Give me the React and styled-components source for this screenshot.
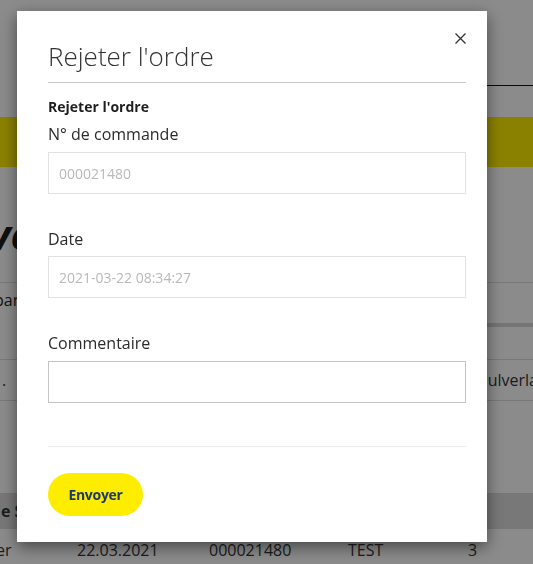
import React from 'react';
import styled, { createGlobalStyle } from 'styled-components';

const GlobalStyle = createGlobalStyle`
  html, body {
    margin: 0;
    padding: 0;
    background: #fff;
    font-family: 'Open Sans', 'Liberation Sans', sans-serif;
    color: #333;
    overflow: hidden;
  }
  * { box-sizing: border-box; }
`;

/* page behind the dialog */
const Page = styled.div`
  width: 533px;
  height: 564px;
  overflow: hidden;
`;

const Header = styled.header`
  height: 86px;
  display: flex;
  justify-content: flex-end;
`;

const NavTab = styled.div`
  width: 60px;
  height: 86px;
  border-bottom: 1px solid #111;
`;

const Banner = styled.div`
  margin-top: 31px;
  height: 50px;
  background: #ffed00;
`;

const TitleBlock = styled.div`
  padding: 42px 0 23px;
  border-bottom: 1px solid #ddd;
  white-space: nowrap;

  h1 {
    margin: 0 0 0 -11px;
    font-size: 42px;
    line-height: 50px;
    font-weight: 700;
    font-style: italic;
    color: #1d1d1d;
  }
`;

const SubText = styled.p`
  margin: 5px 0 0 -6px;
  font-size: 16px;
  line-height: 24px;
  color: #222;
`;

const TabBar = styled.div`
  display: flex;
  justify-content: flex-end;
  margin-top: 11px;
  height: 4px;

  span {
    width: 60px;
    background: #d6d6d6;
  }
`;

const Row = styled.div`
  display: grid;
  grid-template-columns: 77px 132px 139px 120px 1fr;
  align-items: center;
  height: ${p => p.$h}px;
  margin-top: ${p => p.$top || 0}px;
  background: ${p => p.$bg || 'transparent'};
  border-top: ${p => (p.$lined ? '1px solid #ddd' : 'none')};
  border-bottom: ${p => (p.$lined ? '1px solid #ddd' : 'none')};
  font-size: 16px;
  color: #333;
  white-space: nowrap;
`;

const Cell = styled.div`
  overflow: visible;
  font-weight: ${p => (p.$bold ? 700 : 400)};
  margin-left: ${p => p.$shift || 0}px;
`;

/* dialog */
const Backdrop = styled.div`
  position: fixed;
  inset: 0;
  background: rgba(0, 0, 0, 0.455);
  display: flex;
  align-items: flex-start;
  padding: 11px 0 0 17px;
`;

const Dialog = styled.div`
  width: 470px;
  background: #fff;
  box-shadow: 0 5px 15px rgba(0, 0, 0, 0.5);
  padding: 30px 21px 26px 31px;
`;

const DialogHead = styled.div`
  display: flex;
  justify-content: space-between;
  align-items: flex-start;
  padding-bottom: 10px;
  border-bottom: 1px solid #c8c8c8;
`;

const DialogTitle = styled.h2`
  margin: 0;
  font-size: 26px;
  line-height: 31px;
  font-weight: 300;
  color: #333;
`;

const Close = styled.button`
  margin: -8px 0 0;
  padding: 0;
  width: 11px;
  height: 11px;
  border: 0;
  background: none;
  display: flex;
  cursor: pointer;
`;

const SubTitle = styled.h4`
  margin: 13px 0 0;
  font-size: 14px;
  line-height: 21px;
  font-weight: 700;
  color: #1e1e1e;
`;

const Field = styled.div`
  margin-top: ${p => p.$top}px;
`;

const Label = styled.label`
  display: block;
  font-size: 16px;
  line-height: 24px;
  color: #2b2b2b;
  margin-bottom: ${p => p.$gap || 6}px;
`;

const Input = styled.input`
  display: block;
  width: 100%;
  height: 42px;
  padding: 0 10px;
  border: 1px solid ${p => (p.$strong ? '#c4c4c4' : '#e2e2e2')};
  border-radius: 0;
  font-family: 'Open Sans', 'Liberation Sans', sans-serif;
  font-size: 14px;
  color: #333;
  background: #fff;
  outline: none;

  &::placeholder {
    color: #b9b9b9;
  }
`;

const Divider = styled.hr`
  margin: 43px 0 0;
  border: 0;
  border-top: 1px solid #ececec;
`;

const SendButton = styled.button`
  margin-top: 26px;
  width: 95px;
  height: 43px;
  border: 0;
  border-radius: 22px;
  background: #ffed00;
  color: #1b3a6c;
  font-family: 'Open Sans', 'Liberation Sans', sans-serif;
  font-size: 14px;
  font-weight: 700;
  letter-spacing: -0.3px;
  cursor: pointer;
`;

export default function App() {
  return (
    <>
      <GlobalStyle />
      <Page>
        <Header>
          <NavTab />
        </Header>
        <Banner />
        <TitleBlock>
          <h1>ve</h1>
        </TitleBlock>
        <SubText>par</SubText>
        <TabBar>
          <span />
        </TabBar>
        <Row $h={42} $top={32} $lined>
          <Cell $shift={2}>.</Cell>
          <Cell />
          <Cell />
          <Cell />
          <Cell $shift={10}>Pulverlack</Cell>
        </Row>
        <Row $h={36} $top={92} $bg="#dcdcdc">
          <Cell $bold $shift={-4}>le S</Cell>
        </Row>
        <Row $h={42}>
          <Cell $shift={-4}>er</Cell>
          <Cell>22.03.2021</Cell>
          <Cell>000021480</Cell>
          <Cell>TEST</Cell>
          <Cell>3</Cell>
        </Row>
      </Page>

      <Backdrop>
        <Dialog>
          <DialogHead>
            <DialogTitle>Rejeter l'ordre</DialogTitle>
            <Close aria-label="Fermer">
              <svg width="11" height="11" viewBox="0 0 11 11">
                <path d="M0.5 0.5 L10.5 10.5 M10.5 0.5 L0.5 10.5" stroke="#333" strokeWidth="1.3" fill="none" />
              </svg>
            </Close>
          </DialogHead>
          <SubTitle>Rejeter l'ordre</SubTitle>
          <Field $top={5}>
            <Label>N° de commande</Label>
            <Input placeholder="000021480" readOnly />
          </Field>
          <Field $top={33}>
            <Label $gap={5}>Date</Label>
            <Input placeholder="2021-03-22 08:34:27" readOnly />
          </Field>
          <Field $top={33}>
            <Label>Commentaire</Label>
            <Input $strong />
          </Field>
          <Divider />
          <SendButton>Envoyer</SendButton>
        </Dialog>
      </Backdrop>
    </>
  );
}
